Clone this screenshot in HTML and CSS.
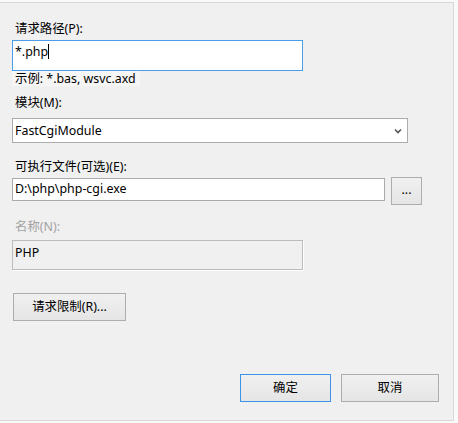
FILE: index.html
```html
<!DOCTYPE html>
<html>
<head>
<meta charset="utf-8">
<link rel="stylesheet" href="styles.css">
</head>
<body>
<div class="panel">
  <div class="label l1">请求路径(P):</div>
  <div class="box focus">*.php<span class="caret"></span></div>
  <div class="hint">示例: *.bas, wsvc.axd</div>
  <div class="label l2">模块(M):</div>
  <div class="select">
    <span>FastCgiModule</span>
    <svg class="chev" width="8" height="6" viewBox="0 0 8 6"><path d="M1 1.5 L4 4.5 L7 1.5" fill="none" stroke="#555" stroke-width="1.6"/></svg>
  </div>
  <div class="label l3">可执行文件(可选)(E):</div>
  <div class="row">
    <div class="box exe">D:\php\php-cgi.exe</div>
    <div class="btn dots">...</div>
  </div>
  <div class="label l4 disabled">名称(N):</div>
  <div class="box name">PHP</div>
  <div class="btn limit">请求限制(R)...</div>
  <div class="footer">
    <div class="btn ok">确定</div>
    <div class="btn cancel">取消</div>
  </div>
</div>
</body>
</html>
```
FILE: styles.css
```css
html, body {
  margin: 0;
  padding: 0;
  background: #f9f9f9;
}
body {
  font-family: "Noto Sans", "Noto Sans CJK SC", sans-serif;
  font-size: 12.4px;
  color: #000;
  padding-top: 2px;
}
.panel {
  box-sizing: border-box;
  width: 454px;
  height: 419px;
  background: #f0f0f0;
  border-top: 1px solid #d9d9d9;
  border-right: 1px solid #d9d9d9;
  border-bottom: 1px solid #d9d9d9;
  padding-left: 12px;
  display: flex;
  flex-direction: column;
  align-items: flex-start;
}
.label {
  line-height: 16px;
  height: 16px;
  padding-left: 3px;
  white-space: nowrap;
}
.l1 { margin-top: 18px; }
.l2 { margin-top: 9px; }
.l3 { margin-top: 16px; }
.l4 { margin-top: 14px; }
.disabled { color: #a3a3a3; }
.box {
  box-sizing: border-box;
  background: #fff;
  border: 1px solid #ababab;
  padding: 3px 0 0 2px;
  line-height: 16px;
  white-space: nowrap;
}
.focus {
  width: 291px;
  height: 31px;
  margin-top: 3px;
  border-color: #4a9de8;
}
.caret {
  display: inline-block;
  width: 1px;
  height: 15px;
  background: #000;
  vertical-align: -3px;
}
.hint {
  line-height: 16px;
  height: 15px;
  padding: 0 4px 0 3px;
  white-space: nowrap;
  background: #f6f6f6;
}
.select {
  box-sizing: border-box;
  width: 396px;
  height: 25px;
  margin-top: 7px;
  background: #fff;
  border: 1px solid #ababab;
  display: flex;
  align-items: center;
  justify-content: space-between;
  padding: 0 5px 0 2px;
  line-height: 16px;
}
.chev { display: block; margin-top: 1px; }
.row {
  display: flex;
  align-items: flex-start;
  gap: 6px;
  margin-top: 2px;
}
.exe {
  width: 373px;
  height: 23px;
  margin-top: 1px;
  padding-top: 2px;
}
.btn {
  box-sizing: border-box;
  height: 28px;
  border: 1px solid #adadad;
  background: linear-gradient(#f0f0f0, #e5e5e5);
  display: flex;
  align-items: center;
  justify-content: center;
  line-height: 16px;
  white-space: nowrap;
}
.dots {
  width: 31px;
  padding-bottom: 2px;
}
.name {
  width: 291px;
  height: 30px;
  margin-top: 5px;
  background: #f0f0f0;
  border-color: #bcbcbc;
  box-shadow: 1px 1px 0 #fff;
  padding-top: 4px;
}
.limit {
  width: 113px;
  margin-top: 23px;
  margin-left: 1px;
}
.footer {
  display: flex;
  gap: 10px;
  margin-top: 53px;
  align-self: flex-end;
  margin-right: 14px;
}
.ok {
  width: 91px;
  border-color: #3b94e8;
}
.cancel {
  width: 98px;
}
```
